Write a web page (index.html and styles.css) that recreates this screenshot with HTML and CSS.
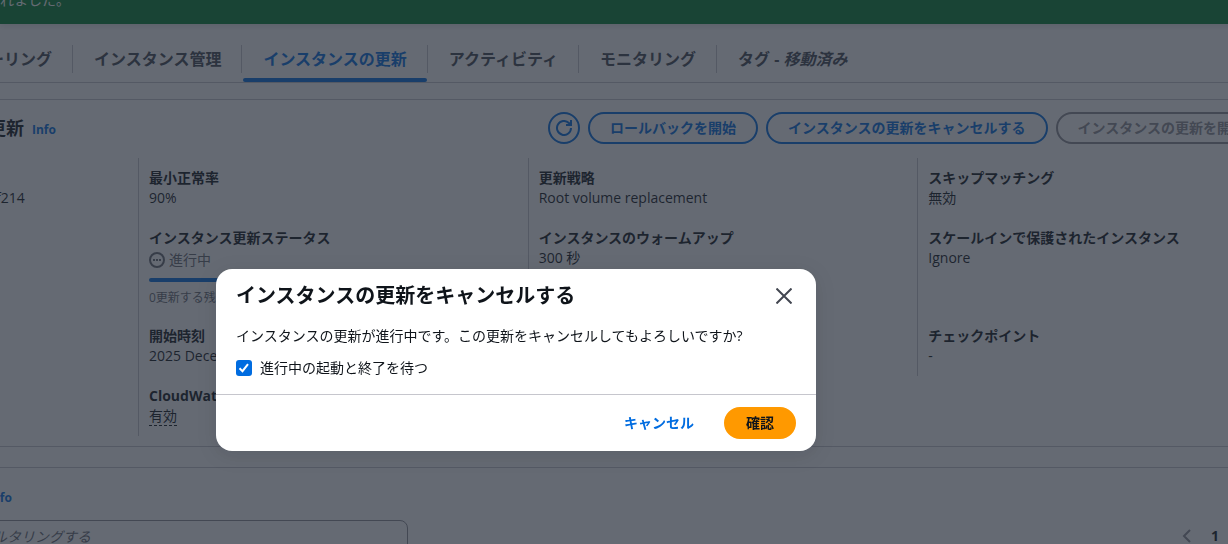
FILE: index.html
```html
<!DOCTYPE html>
<html lang="ja">
<head>
  <meta charset="UTF-8" />
  <meta name="viewport" content="width=device-width, initial-scale=1.0" />
  <title>インスタンスの更新</title>
  <link rel="stylesheet" href="styles.css">
</head>
<body>
  <div class="page">
    <div class="flash">れました。</div>

    <nav class="tabs">
      <a class="tab" href="#scaling">ーリング</a>
      <a class="tab" href="#management">インスタンス管理</a>
      <a class="tab active" href="#refresh">インスタンスの更新</a>
      <a class="tab" href="#activity">アクティビティ</a>
      <a class="tab" href="#monitoring">モニタリング</a>
      <a class="tab" href="#tags">タグ - <i>移動済み</i></a>
    </nav>

    <section class="panel">
      <div class="panel-header">
        <h2>更新</h2>
        <a class="info" href="#info">Info</a>
        <div class="actions">
          <button class="btn icon-btn" aria-label="更新">
            <svg width="16" height="16" viewBox="0 0 16 16" fill="none" stroke="currentColor" stroke-width="2">
              <path d="M15 8a7 7 0 1 1-2.1-5L15 5" />
              <path d="M10 5h5V0" />
            </svg>
          </button>
          <button class="btn">ロールバックを開始</button>
          <button class="btn">インスタンスの更新をキャンセルする</button>
          <button class="btn" disabled>インスタンスの更新を開始</button>
        </div>
      </div>

      <div class="details">
        <div class="cell first"><div>f214</div></div>
        <div class="cell">
          <div class="label">最小正常率</div>
          <div>90%</div>
        </div>
        <div class="cell">
          <div class="label">更新戦略</div>
          <div>Root volume replacement</div>
        </div>
        <div class="cell">
          <div class="label">スキップマッチング</div>
          <div>無効</div>
        </div>

        <div class="cell first"></div>
        <div class="cell">
          <div class="label">インスタンス更新ステータス</div>
          <div class="status">
            <svg width="16" height="16" viewBox="0 0 16 16" fill="none" stroke="currentColor" stroke-width="2">
              <circle cx="8" cy="8" r="7" />
              <path d="M4 8h2M7 8h2M10 8h2" />
            </svg>
            進行中
          </div>
          <div class="progress"></div>
          <div class="hint">0更新する残り</div>
        </div>
        <div class="cell">
          <div class="label">インスタンスのウォームアップ</div>
          <div>300 秒</div>
        </div>
        <div class="cell">
          <div class="label">スケールインで保護されたインスタンス</div>
          <div>Ignore</div>
        </div>

        <div class="cell first"></div>
        <div class="cell">
          <div class="label">開始時刻</div>
          <div>2025 December</div>
        </div>
        <div class="cell"></div>
        <div class="cell">
          <div class="label">チェックポイント</div>
          <div>-</div>
        </div>

        <div class="cell first"></div>
        <div class="cell">
          <div class="label">CloudWatch</div>
          <div><span class="dashed">有効</span></div>
        </div>
      </div>
    </section>

    <section class="panel history">
      <a class="info" href="#history-info">Info</a>
      <div class="toolbar">
        <input class="filter" type="text" placeholder="ルタリングする" aria-label="フィルタリングする" />
        <div class="pagination">
          <button class="prev" aria-label="前のページ" disabled>
            <svg width="16" height="16" viewBox="0 0 16 16" fill="none" stroke="currentColor" stroke-width="2">
              <path d="M11 2 5 8l6 6" />
            </svg>
          </button>
          <button class="current">1</button>
        </div>
      </div>
    </section>
  </div>

  <!-- Confirm dialog -->
  <div class="overlay">
    <div class="modal" role="dialog" aria-modal="true" aria-labelledby="modal-title">
      <div class="modal-header">
        <h1 id="modal-title">インスタンスの更新をキャンセルする</h1>
        <button class="close" aria-label="閉じる">
          <svg width="16" height="16" viewBox="0 0 16 16" fill="none" stroke="currentColor" stroke-width="2">
            <path d="m.5.5 15 15M15.5.5l-15 15" />
          </svg>
        </button>
      </div>
      <div class="modal-body">
        <p>インスタンスの更新が進行中です。この更新をキャンセルしてもよろしいですか?</p>
        <div class="check">
          <input type="checkbox" id="wait" checked />
          <label for="wait">進行中の起動と終了を待つ</label>
        </div>
      </div>
      <div class="modal-footer">
        <button class="btn link">キャンセル</button>
        <button class="btn primary">確認</button>
      </div>
    </div>
  </div>
</body>
</html>
```
FILE: styles.css
```css
* {
  box-sizing: border-box;
}
body {
  margin: 0;
  height: 100vh;
  overflow: hidden;
  background: #fff;
  color: #0f141a;
  font-family: "Open Sans", "Noto Sans CJK JP", sans-serif;
  font-size: 14px;
  line-height: 20px;
}
h1, h2, p {
  margin: 0;
}
button, input {
  font: inherit;
}
svg {
  display: block;
}

/* The page is wider than the window on the right */
.page {
  margin-right: -79px;
}
.flash {
  display: flex;
  align-items: flex-end;
  height: 24px;
  padding-bottom: 14px;
  background: #00802f;
  color: #fff;
  box-shadow: 0 2px 6px rgba(0, 7, 22, 0.12);
}

/* Tabs */
.tabs {
  display: flex;
  gap: 1px;
  margin-left: -32px;
  padding-top: 21px;
  border-bottom: 1px solid #c6c6cd;
}
.tab {
  position: relative;
  height: 28px;
  margin-bottom: 9px;
  padding: 0 20px;
  border-right: 1px solid #c6c6cd;
  color: #424650;
  font-size: 16px;
  font-weight: 700;
  line-height: 28px;
  text-decoration: none;
}
.tab:last-child {
  border-right: none;
}
.tab.active {
  color: #006ce0;
}
.tab.active::after {
  content: "";
  position: absolute;
  left: 0;
  right: 0;
  bottom: -9px;
  height: 4px;
  border-radius: 2px;
  background: #006ce0;
}

/* Panels */
.panel {
  margin-top: 16px;
  padding: 12px 0 10px;
  border: solid #c6c6cd;
  border-width: 1px 0;
}
.panel-header {
  display: flex;
  align-items: center;
  gap: 8px;
  margin-left: -12px;
  padding-right: 40px;
}
.panel-header h2 {
  font-size: 18px;
  line-height: 24px;
}
.info {
  padding-top: 4px;
  color: #006ce0;
  font-size: 12px;
  font-weight: 700;
  text-decoration: none;
}
.actions {
  display: flex;
  gap: 8px;
  margin-left: auto;
}
.btn {
  height: 32px;
  padding: 0 20px;
  border: 2px solid #006ce0;
  border-radius: 16px;
  background: #fff;
  color: #006ce0;
  font-weight: 700;
  white-space: nowrap;
  cursor: pointer;
}
.btn:disabled {
  border-color: #8c8c94;
  color: #8c8c94;
}
.icon-btn {
  padding: 0 6px;
}

.details {
  display: grid;
  grid-template-columns: 138px repeat(3, 1fr);
  margin-top: 14px;
}
.cell {
  padding: 10px;
  border-left: 1px solid #c6c6cd;
}
.cell.first {
  margin-left: -14px;
  padding-top: 30px;
  border-left: none;
}
.label {
  font-weight: 700;
}
.status {
  display: flex;
  align-items: center;
  gap: 4px;
  height: 24px;
  color: #656871;
}
.progress {
  height: 4px;
  margin-top: 6px;
  border-radius: 2px;
  background: #006ce0;
}
.hint {
  margin-top: 8px;
  color: #656871;
  font-size: 12px;
  line-height: 16px;
}
.dashed {
  border-bottom: 1px dashed #0f141a;
}

.history {
  margin-top: 20px;
  padding-top: 16px;
}
.history .info {
  display: block;
  margin-left: -12px;
}
.toolbar {
  display: flex;
  justify-content: space-between;
  margin-top: 12px;
}
.filter {
  width: 420px;
  height: 32px;
  margin-left: -12px;
  padding: 0 4px;
  border: 1px solid #8c8c94;
  border-radius: 8px;
  color: #0f141a;
}
.filter::placeholder {
  color: #656871;
  font-style: italic;
}
.pagination {
  display: flex;
  align-items: center;
  gap: 16px;
  width: 128px;
}
.pagination button {
  padding: 0;
  border: none;
  background: none;
  color: #0f141a;
  font-weight: 700;
}
.pagination .prev {
  color: #8c8c94;
}

/* Modal */
.overlay {
  position: fixed;
  inset: 0;
  display: flex;
  align-items: center;
  justify-content: center;
  padding: 176px 196px 0 0;
  background: rgba(35, 43, 55, 0.7);
}
.modal {
  width: 100%;
  max-width: 600px;
  border-radius: 16px;
  background: #fff;
  box-shadow: 0 4px 20px 1px rgba(0, 7, 22, 0.1);
}
.modal-header {
  display: flex;
  align-items: center;
  justify-content: space-between;
  padding: 12px 20px 15px;
}
.modal-header h1 {
  font-size: 20px;
  line-height: 30px;
}
.close {
  padding: 4px;
  border: none;
  background: none;
  color: #424650;
  cursor: pointer;
}
.modal-body {
  padding: 0 20px 16px;
}
.check {
  display: flex;
  align-items: center;
  gap: 8px;
  margin-top: 12px;
}
.check input {
  appearance: none;
  width: 16px;
  height: 16px;
  margin: 0;
  border: 1px solid #8c8c94;
  border-radius: 3px;
}
.check input:checked {
  border: none;
  background: #006ce0 url("data:image/svg+xml,%3Csvg xmlns='http://www.w3.org/2000/svg' viewBox='0 0 16 16'%3E%3Cpath d='m3.5 8.2 3 3 5.5-7' fill='none' stroke='white' stroke-width='2'/%3E%3C/svg%3E");
}
.modal-footer {
  display: flex;
  justify-content: flex-end;
  gap: 8px;
  padding: 12px 20px;
  border-top: 1px solid #c6c6cd;
}
.btn.link {
  border-color: transparent;
}
.btn.primary {
  border-color: #ff9900;
  background: #ff9900;
  color: #0f141a;
}
```
